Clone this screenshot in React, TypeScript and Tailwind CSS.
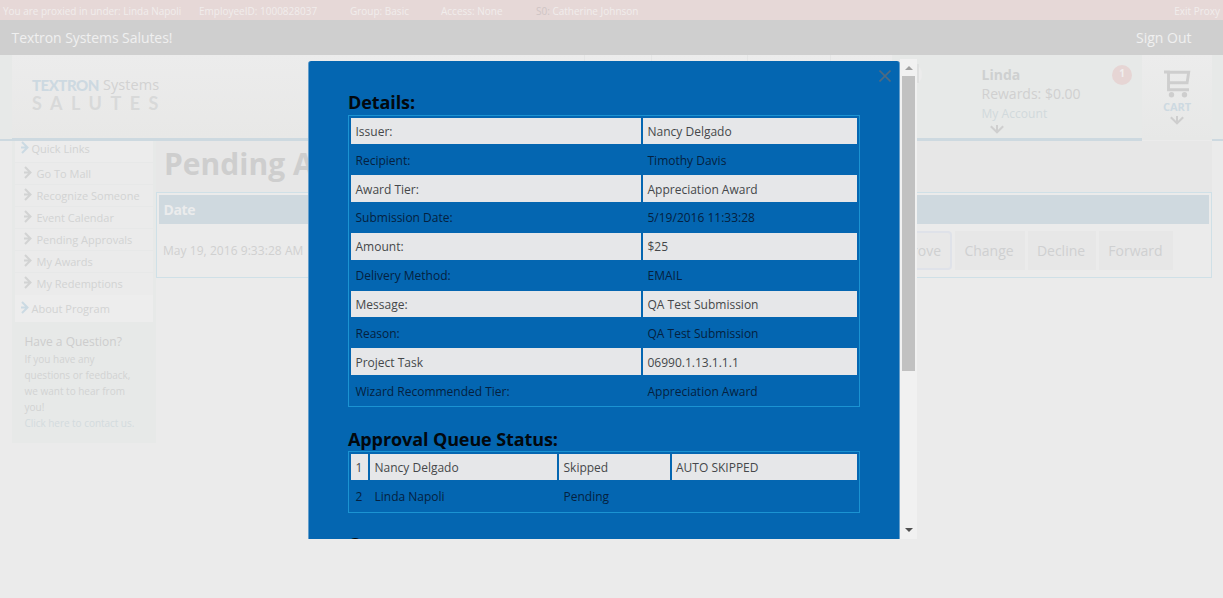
import React from "react";
import { BarChart3, CircleHelp, House, Trophy } from "lucide-react";

const details: [string, string][] = [
  ["Issuer:", "Nancy Delgado"],
  ["Recipient:", "Timothy Davis"],
  ["Award Tier:", "Appreciation Award"],
  ["Submission Date:", "5/19/2016 11:33:28"],
  ["Amount:", "$25"],
  ["Delivery Method:", "EMAIL"],
  ["Message:", "QA Test Submission"],
  ["Reason:", "QA Test Submission"],
  ["Project Task", "06990.1.13.1.1.1"],
  ["Wizard Recommended Tier:", "Appreciation Award"],
];

const queue: string[][] = [
  ["1", "Nancy Delgado", "Skipped", "AUTO SKIPPED"],
  ["2", "Linda Napoli", "Pending", ""],
];

const links = ["Go To Mall", "Recognize Someone", "Event Calendar", "Pending Approvals", "My Awards", "My Redemptions"];

function Arrow({ className }: { className: string }) {
  return (
    <svg viewBox="0 0 8 13" className={className} fill="none" stroke="currentColor" strokeWidth="2">
      <path d="M1 1l5.5 5.5L1 12M0 6.5h6.5" />
    </svg>
  );
}

function DownArrow({ className }: { className: string }) {
  return (
    <svg viewBox="0 0 14 10" className={className} fill="none" stroke="currentColor" strokeWidth="2">
      <path d="M.8 1.3L7 7.3l6.2-6M7 0v7" />
    </svg>
  );
}

function Cell({ light, children }: { light: boolean; children: React.ReactNode }) {
  return (
    <div
      className={
        light
          ? "flex items-center whitespace-nowrap bg-[#e6e7e9] pt-[2px] pl-[4.5px] text-[#45474a]"
          : "flex items-center whitespace-nowrap pt-[2px] pl-[4.5px] text-[#05213f]"
      }
    >
      {children}
    </div>
  );
}

function TopBars() {
  return (
    <>
      <div className="flex h-5 items-center bg-[#e6d8d7] pt-0.5 text-[10px] whitespace-nowrap text-[#f1edec]">
        <span className="w-[199px] pl-[3px] tracking-[-0.03px]">You are proxied in under: Linda Napoli</span>
        <span className="w-[151px]">EmployeeID: 1000828037</span>
        <span className="w-[91px]">Group: Basic</span>
        <span className="w-[95px]">Access: None</span>
        <span><span className="text-[#cfc5c5]">S0:</span> Catherine Johnson</span>
        <span className="ml-auto pr-[3px]">Exit Proxy</span>
      </div>
      <div className="flex h-[35px] items-center justify-between bg-[#cfcfcf] pr-[31.5px] pl-[11.5px] text-[14px] text-[#f0f0f0]">
        <span className="tracking-[-0.07px]">Textron Systems Salutes!</span>
        <span>Sign Out</span>
      </div>
    </>
  );
}

function Header() {
  return (
    <header className="flex h-[86px]">
      <div className="w-3 border-b-2 border-[#cdd9e0] bg-[#e7e9e8]" />
      <div className="flex w-[880px] border-b-[3px] border-[#cdd9e0] bg-linear-to-b from-[#ececec] to-[#e8e8e7]">
        <div className="w-[572px] pt-[20px] pl-5 whitespace-nowrap">
          <div className="flex gap-[5px] text-[14.5px] leading-5 text-[#d2d2d2]">
            <span className="w-[66px] font-[Lato] text-[15px] font-black tracking-[-0.5px] text-[#cdd9e1]">TEXTRON</span>
            <span className="tracking-[0.05px]">Systems</span>
          </div>
          <div className="-mt-px font-[Lato] text-[18px] leading-[18px] font-bold tracking-[8.5px] text-[#d8d9d9]">SALUTES</div>
        </div>
        <nav className="flex text-[9px] font-bold text-[#cdd9e1] [&>div]:flex [&>div]:flex-col [&>div]:items-center [&>div]:border-l [&>div]:border-[#e4e5e5] [&>div]:pt-3 [&_svg]:mb-[9px] [&_svg]:h-6 [&_svg]:w-[29px] [&_svg]:text-[#cfcfcf]">
          <div className="w-[67px]"><House />HOME</div>
          <div className="w-[96px]"><Trophy />RECOGNIZE</div>
          <div className="w-[83px]"><BarChart3 />REPORTS</div>
          <div className="w-[62px]"><CircleHelp />HELP</div>
        </nav>
      </div>
      <div className="flex w-[250px] border-b-[3px] border-[#cdd9e0] bg-[#e7e9e8]">
        <div className="mt-2 -ml-1 h-[23px] w-[34px] rounded-r-full bg-[#ececec] pt-px pr-[3px]">
          <div className="h-[19px] w-[31px] border-r-2 border-[#dfe0e0]" />
        </div>
        <div className="ml-[59.5px] w-[130.5px] pt-[9px] whitespace-nowrap">
          <div className="text-[14px] leading-[21px] font-bold text-[#ced0d0]">Linda</div>
          <div className="-mt-px text-[14px] leading-[19px] text-[#d0d0d0]">Rewards: $0.00</div>
          <div className="pt-px text-[12px] leading-[20px] tracking-[0.05px] text-[#d1d9dc]">My Account</div>
          <DownArrow className="mt-px ml-2 h-[10px] w-[14px] text-[#cfcfcf]" />
        </div>
        <div className="mt-[10px] flex h-5 w-5 items-center justify-center rounded-full bg-[#e6d5d4] pb-[3px] text-[10px] font-bold text-[#f0eeee]">1</div>
      </div>
      <div className="flex h-[85px] w-[70px] flex-col items-center bg-linear-to-b from-[#ececec] to-[#e7e8e7] pt-[15px] text-[#cecece]">
        <svg viewBox="0 0 27 28" className="h-7 w-[27px]" fill="none" stroke="currentColor" strokeWidth="2.9">
          <path d="M0 2h4.5v17.8h20.5M4.5 2.2h20.2l-1.6 10.6H5" />
          <circle cx="7.5" cy="24.7" r="2.7" fill="currentColor" stroke="none" />
          <circle cx="20.5" cy="24.7" r="2.7" fill="currentColor" stroke="none" />
        </svg>
        <div className="mt-px text-[11px] leading-[16px] font-bold tracking-[-0.1px] text-[#cdd9e1]">CART</div>
        <DownArrow className="mt-px h-[10px] w-[14px]" />
      </div>
      <div className="flex-1 border-b-2 border-[#cdd9e0] bg-[#e7e9e8]" />
    </header>
  );
}

function Sidebar() {
  return (
    <aside className="ml-3 w-[144px] border-x-[3px] border-[#e7e9e8] text-[11px] text-[#d2d3d3]">
      <div className="flex h-[21px] items-start bg-[#ececec] pl-[6px]">
        <Arrow className="h-[13px] w-2 text-[#cbdae3]" />
        <span className="ml-[2.5px] leading-[15px]">Quick Links</span>
      </div>
      {links.map((l) => (
        <div key={l} className="flex h-[22px] items-center border-t border-[#e7e8e8] pl-[8.5px] whitespace-nowrap">
          <Arrow className="mb-[3px] h-[13px] w-2 text-[#d2d3d3]" />
          <span className="ml-[5px] pt-px">{l}</span>
        </div>
      ))}
      <div className="mt-px flex h-[27px] items-center bg-[#ededed] pl-[6px]">
        <Arrow className="mb-0.5 h-[13px] w-2 text-[#cbdae3]" />
        <span className="ml-[2.5px] pt-px">About Program</span>
      </div>
      <div className="-mx-[3px] h-[121px] bg-[#e7e9e8] pt-[11px] pl-[12.5px] text-[10px] leading-4 whitespace-nowrap">
        <div className="text-[12px] leading-[18px] text-[#cdcdcd]">Have a Question?</div>
        <div>If you have any</div>
        <div>questions or feedback,</div>
        <div>we want to hear from</div>
        <div>you!</div>
        <div className="tracking-[-0.04px] text-[#d3dbde]">Click here to contact us.</div>
      </div>
    </aside>
  );
}

function Main() {
  return (
    <main className="w-[1056px]">
      <h1 className="h-[51px] bg-[#e7e7e7] pt-[2px] pl-2 text-[30px] leading-[42px] font-bold text-[#cecece]">Pending Approvals</h1>
      <div className="h-[86px] border border-[#cfe0e7] p-0.5">
        <div className="flex h-[29px] items-center bg-[#cfd9df] pl-[4.5px] text-[14px] font-bold tracking-[-0.4px] text-[#ebeced]">Date</div>
        <div className="flex h-[53px] items-center pl-[4px]">
          <span className="w-[687px] text-[12px] tracking-[0.05px] text-[#d0d0d0]">May 19, 2016 9:33:28 AM</span>
          <div className="flex h-[39px] gap-[3px] text-[14px] text-[#cfd0d1]">
            <div className="flex w-[102px] items-center justify-end rounded-sm border-2 border-[#dfe2e9] bg-[#e8e8e8] pr-[9px]">Approve</div>
            <div className="flex w-[70px] items-center justify-center bg-[#e7e7e7] pr-[2px]">Change</div>
            <div className="flex w-[68px] items-center justify-center bg-[#e7e7e7] pr-[2px]">Decline</div>
            <div className="flex w-[74px] items-center justify-center bg-[#e7e7e7] pr-[1px]">Forward</div>
          </div>
        </div>
      </div>
    </main>
  );
}

function Dialog() {
  return (
    <div className="absolute top-[59px] left-[308px] flex h-[480px] w-[609px] overflow-hidden">
      <div className="relative mt-[2px] w-[592px] overflow-hidden rounded-t-[3px] border-x border-[#649ecb] bg-[rgba(1,100,176,0.988)] px-[39px] text-[12px]">
        <svg viewBox="0 0 12 12" className="absolute top-[9px] right-[8.5px] h-3 w-3 stroke-[#4f6a80]" strokeWidth="1.6">
          <path d="M.5.5l11 11M11.5.5l-11 11" />
        </svg>
        <h2 className="h-[54px] pt-[29px] text-[18px] leading-[25px] font-bold tracking-[-0.1px] text-[#02080e]">Details:</h2>
        <div className="grid h-[292px] w-[512px] auto-rows-[26.85px] grid-cols-[290px_214px] gap-[2px] border border-[#1b93d2] pt-[1.5px] pl-[2px]">
          {details.map(([a, b], i) => (
            <React.Fragment key={a}>
              <Cell light={i % 2 === 0}>{a}</Cell>
              <Cell light={i % 2 === 0}>{b}</Cell>
            </React.Fragment>
          ))}
        </div>
        <h2 className="h-[44px] pt-[20px] text-[18px] leading-[25px] font-bold tracking-[-0.1px] text-[#02080e]">Approval Queue Status:</h2>
        <div className="grid h-[62px] w-[512px] auto-rows-[26.85px] grid-cols-[17px_187px_110.5px_185.5px] gap-[2px] border border-[#1b93d2] pt-[1.5px] pl-[2px]">
          {queue.map((r, i) => r.map((c, j) => <Cell key={`${i}-${j}`} light={i % 2 === 0}>{c}</Cell>))}
        </div>
        <h2 className="pt-[19px] text-[18px] leading-[25px] font-bold text-[#02080e]">Comments:</h2>
      </div>
      <div className="flex w-[17px] flex-col items-center bg-[#f1f1f1]">
        <svg viewBox="0 0 8 4" className="mt-[7px] h-1 w-2 fill-[#a0a0a0]"><path d="M0 4l4-4 4 4z" /></svg>
        <div className="mt-[6px] h-[295px] w-[13px] bg-[#c1c1c1]" />
        <svg viewBox="0 0 8 4" className="mt-auto mb-[7px] h-1 w-2 fill-[#505050]"><path d="M0 0l4 4 4-4z" /></svg>
      </div>
    </div>
  );
}

export default function App() {
  return (
    <div className="relative h-[598px] w-[1223px] overflow-hidden bg-[#ebebeb] font-['Open_Sans',sans-serif]">
      <TopBars />
      <Header />
      <div className="flex">
        <Sidebar />
        <Main />
      </div>
      <Dialog />
    </div>
  );
}
